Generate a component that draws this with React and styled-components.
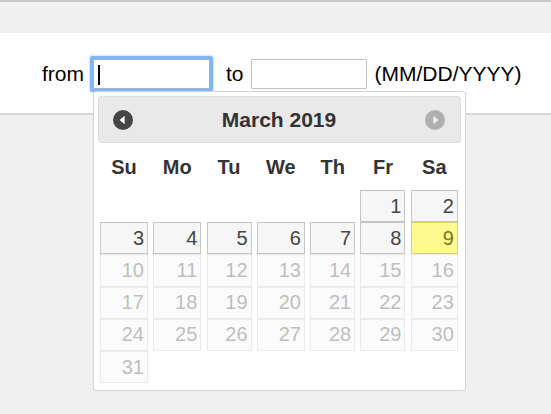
import React from "react";
import styled, { createGlobalStyle } from "styled-components";

const GlobalStyle = createGlobalStyle`
    html, body {
        margin: 0;
        padding: 0;
        background: #f0f0f0;
        font-family: "Liberation Sans", Arial, sans-serif;
    }
`;

const Page = styled.div`
    min-height: 414px;
    background: #f0f0f0;
`;

const TopStrip = styled.div`
    height: 31px;
    border-top: 2px solid #c8c8c8;
    background: #f0f0f0;
`;

const Panel = styled.div`
    position: relative;
    z-index: 2;
    height: 78px;
    display: flex;
    align-items: center;
    padding: 2px 0 0 42px;
    background: #fff;
    border-bottom: 2px solid #d6d6d6;
`;

const Label = styled.span`
    font-size: 21px;
    color: #000;
    margin-left: ${({ $ml }) => $ml || 0}px;
    margin-right: ${({ $mr }) => $mr || 0}px;
`;

const Field = styled.div`
    position: relative;
`;

const DateInput = styled.input`
    display: block;
    box-sizing: border-box;
    width: ${({ $w }) => $w}px;
    height: 30px;
    margin: 0;
    padding: 0 4px;
    font-family: inherit;
    font-size: 18px;
    background: #fff;
    border: 1px solid ${({ $focused }) => ($focused ? "#9db3cf" : "#bfbfbf")};
    border-radius: 1px;
    outline: none;
    box-shadow: ${({ $focused }) =>
        $focused
            ? "0 0 0 3px rgba(118, 172, 240, 0.85), 0 0 2px 4px rgba(150, 195, 248, 0.45)"
            : "none"};
`;

const Caret = styled.span`
    position: absolute;
    left: 5px;
    top: 6px;
    width: 2px;
    height: 20px;
    background: #000;
`;

const Picker = styled.div`
    position: absolute;
    left: 0;
    top: calc(100% + 2px);
    box-sizing: border-box;
    width: 373px;
    padding: 4px 4px 7px;
    background: #fff;
    border: 1px solid #d3d3d3;
    border-radius: 3px;
    color: #333;
`;

const PickerHeader = styled.div`
    box-sizing: border-box;
    height: 47px;
    display: flex;
    align-items: center;
    padding: 0 15px 0 14px;
    background: #e9e9e9;
    border: 1px solid #dddddd;
    border-radius: 3px;
`;

const NavButton = styled.svg`
    width: 20px;
    height: 20px;
    flex: none;
    opacity: ${({ $disabled }) => ($disabled ? 0.35 : 1)};
`;

const Title = styled.div`
    flex: 1;
    text-align: center;
    font-size: 21px;
    font-weight: bold;
    color: #333;
`;

const Grid = styled.div`
    display: grid;
    grid-template-columns: 48px 48px 45px 48px 45px 45px 47px;
    column-gap: 5.3px;
    margin-left: 2px;
`;

const WeekHead = styled(Grid)`
    height: 47px;
    align-items: center;
    padding-top: 1px;
    box-sizing: border-box;
`;

const DayName = styled.div`
    text-align: center;
    font-size: 20px;
    font-weight: bold;
    color: #333;
`;

const Days = styled(Grid)`
    grid-auto-rows: 32.2px;
`;

const palette = {
    active: { bg: "#f6f6f6", border: "#c5c5c5", color: "#454545" },
    today: { bg: "#fffa90", border: "#dad55e", color: "#777620" },
    disabled: { bg: "#f6f6f6", border: "#c5c5c5", color: "#454545" },
};

const DayCell = styled.div`
    box-sizing: border-box;
    display: flex;
    align-items: center;
    justify-content: flex-end;
    padding-right: 3px;
    font-size: 20px;
    background: ${({ $state }) => palette[$state].bg};
    border: 1px solid ${({ $state }) => palette[$state].border};
    color: ${({ $state }) => palette[$state].color};
    opacity: ${({ $state }) => ($state === "disabled" ? 0.35 : 1)};
`;

const Empty = styled.div``;

const Arrow = ({ dir, disabled }) => (
    <NavButton viewBox="0 0 20 20" $disabled={disabled}>
        <circle cx="10" cy="10" r="10" fill="#454545" />
        {dir === "prev" ? (
            <polygon points="6.6,10 11.6,5.8 11.6,14.2" fill="#fff" />
        ) : (
            <polygon points="13.4,10 8.4,5.8 8.4,14.2" fill="#fff" />
        )}
    </NavButton>
);

const weekDays = ["Su", "Mo", "Tu", "We", "Th", "Fr", "Sa"];
const firstWeekday = 5; // March 1st 2019 is a Friday
const today = 9;

export default function App() {
    const days = Array.from({ length: 31 }, (_, i) => i + 1);

    return (
        <Page>
            <GlobalStyle />
            <TopStrip />
            <Panel>
                <Label $mr={9}>from</Label>
                <Field>
                    <DateInput $w={117} $focused readOnly />
                    <Caret />
                    <Picker>
                        <PickerHeader>
                            <Arrow dir="prev" />
                            <Title>March 2019</Title>
                            <Arrow dir="next" disabled />
                        </PickerHeader>
                        <WeekHead>
                            {weekDays.map((d) => (
                                <DayName key={d}>{d}</DayName>
                            ))}
                        </WeekHead>
                        <Days>
                            {Array.from({ length: firstWeekday }, (_, i) => (
                                <Empty key={"e" + i} />
                            ))}
                            {days.map((d) => (
                                <DayCell
                                    key={d}
                                    $state={d === today ? "today" : d > today ? "disabled" : "active"}
                                >
                                    {d}
                                </DayCell>
                            ))}
                        </Days>
                    </Picker>
                </Field>
                <Label $ml={16} $mr={7}>to</Label>
                <DateInput $w={116} readOnly />
                <Label $ml={8}>(MM/DD/YYYY)</Label>
            </Panel>
        </Page>
    );
}
